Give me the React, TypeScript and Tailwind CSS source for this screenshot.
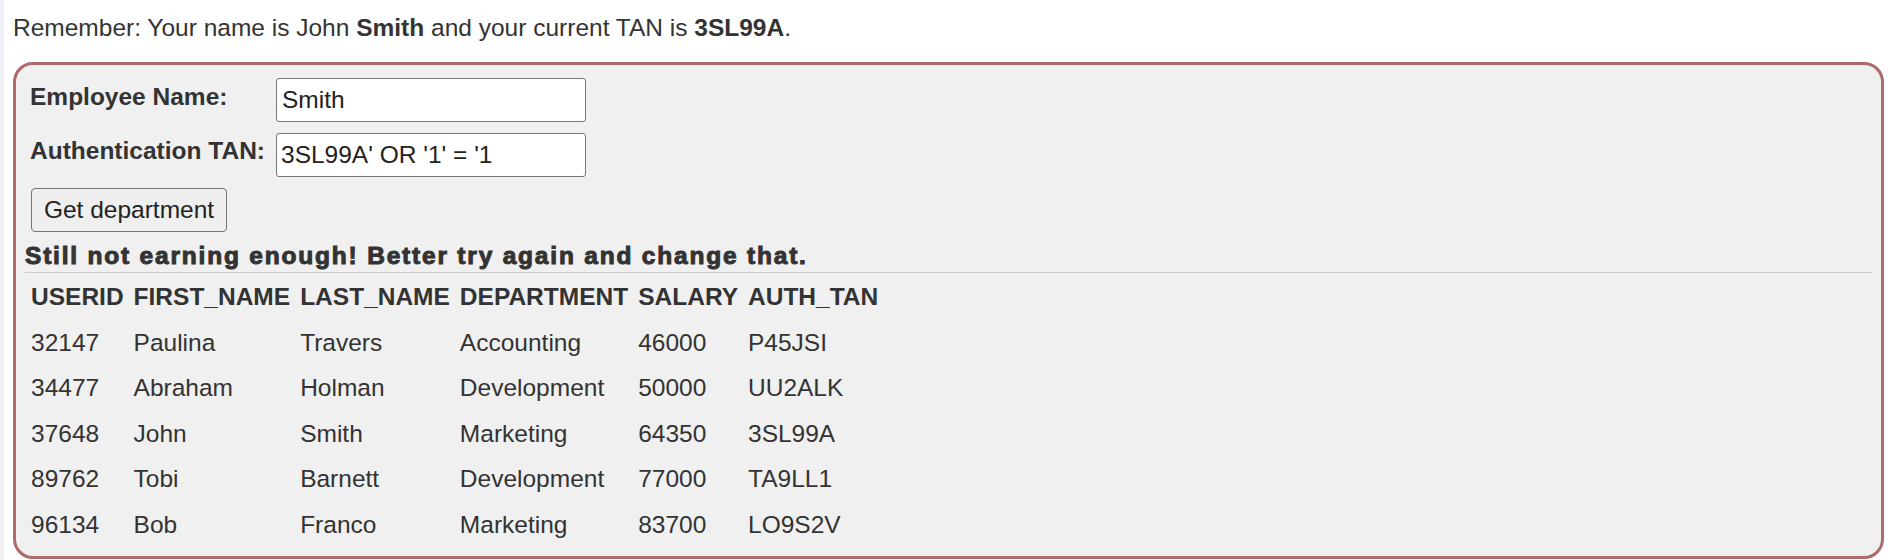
import React from "react";

const rows = [
  ["32147", "Paulina", "Travers", "Accounting", "46000", "P45JSI"],
  ["34477", "Abraham", "Holman", "Development", "50000", "UU2ALK"],
  ["37648", "John", "Smith", "Marketing", "64350", "3SL99A"],
  ["89762", "Tobi", "Barnett", "Development", "77000", "TA9LL1"],
  ["96134", "Bob", "Franco", "Marketing", "83700", "LO9S2V"],
];

const headers = ["USERID", "FIRST_NAME", "LAST_NAME", "DEPARTMENT", "SALARY", "AUTH_TAN"];

export default function App() {
  return (
    <div className="flex min-h-[560px] w-full bg-white font-['Liberation_Sans',Arial,sans-serif] text-[24.5px] leading-[27.5px] text-[#333333]">
      <div className="w-[4px] shrink-0 bg-[#eef0f5]" />
      <div className="flex-1 pl-[9px] pr-[6px] pt-[14px]">
        <p>
          Remember: Your name is John <b>Smith</b> and your current TAN is <b>3SL99A</b>.
        </p>
        <div className="mt-[20px] h-[497px] rounded-[20px] border-[3px] border-[#ae6a6a] bg-[#f0f0f0] px-[9px] pt-[13px]">
          <div className="grid grid-cols-[246px_310px] gap-y-[11px] pl-[5px]">
            <label className="mt-[5px] font-bold">Employee Name:</label>
            <input
              readOnly
              value="Smith"
              className="h-[44px] w-[310px] rounded-[3px] border border-[#767676] bg-white px-[5px] text-[24.5px] text-[#222] outline-none"
            />
            <label className="mt-[4px] font-bold">Authentication TAN:</label>
            <input
              readOnly
              value="3SL99A' OR '1' = '1"
              className="h-[44px] w-[310px] rounded-[3px] border border-[#767676] bg-white px-[4px] text-[24.5px] text-[#222] outline-none"
            />
          </div>
          <div className="pl-[6px]">
            <button className="mt-[11px] h-[44px] w-[196px] rounded-[4px] border border-[#767676] bg-[#efefef] text-[24.5px] text-[#222]">
              Get department
            </button>
          </div>
          <div className="mt-[10px] font-bold tracking-[1.8px] [-webkit-text-stroke:1px_#333333]">
            Still not earning enough! Better try again and change that.
          </div>
          <div className="mt-[3px] h-px bg-[#cccccc]" />
          <table className="border-separate border-spacing-[2px]">
            <thead>
              <tr>
                {headers.map((h) => (
                  <th key={h} className="px-[4px] py-[8px] text-left font-bold">
                    {h}
                  </th>
                ))}
              </tr>
            </thead>
            <tbody>
              {rows.map((r) => (
                <tr key={r[0]}>
                  {r.map((c, i) => (
                    <td key={i} className="px-[4px] py-[8px]">
                      {c}
                    </td>
                  ))}
                </tr>
              ))}
            </tbody>
          </table>
        </div>
      </div>
    </div>
  );
}
